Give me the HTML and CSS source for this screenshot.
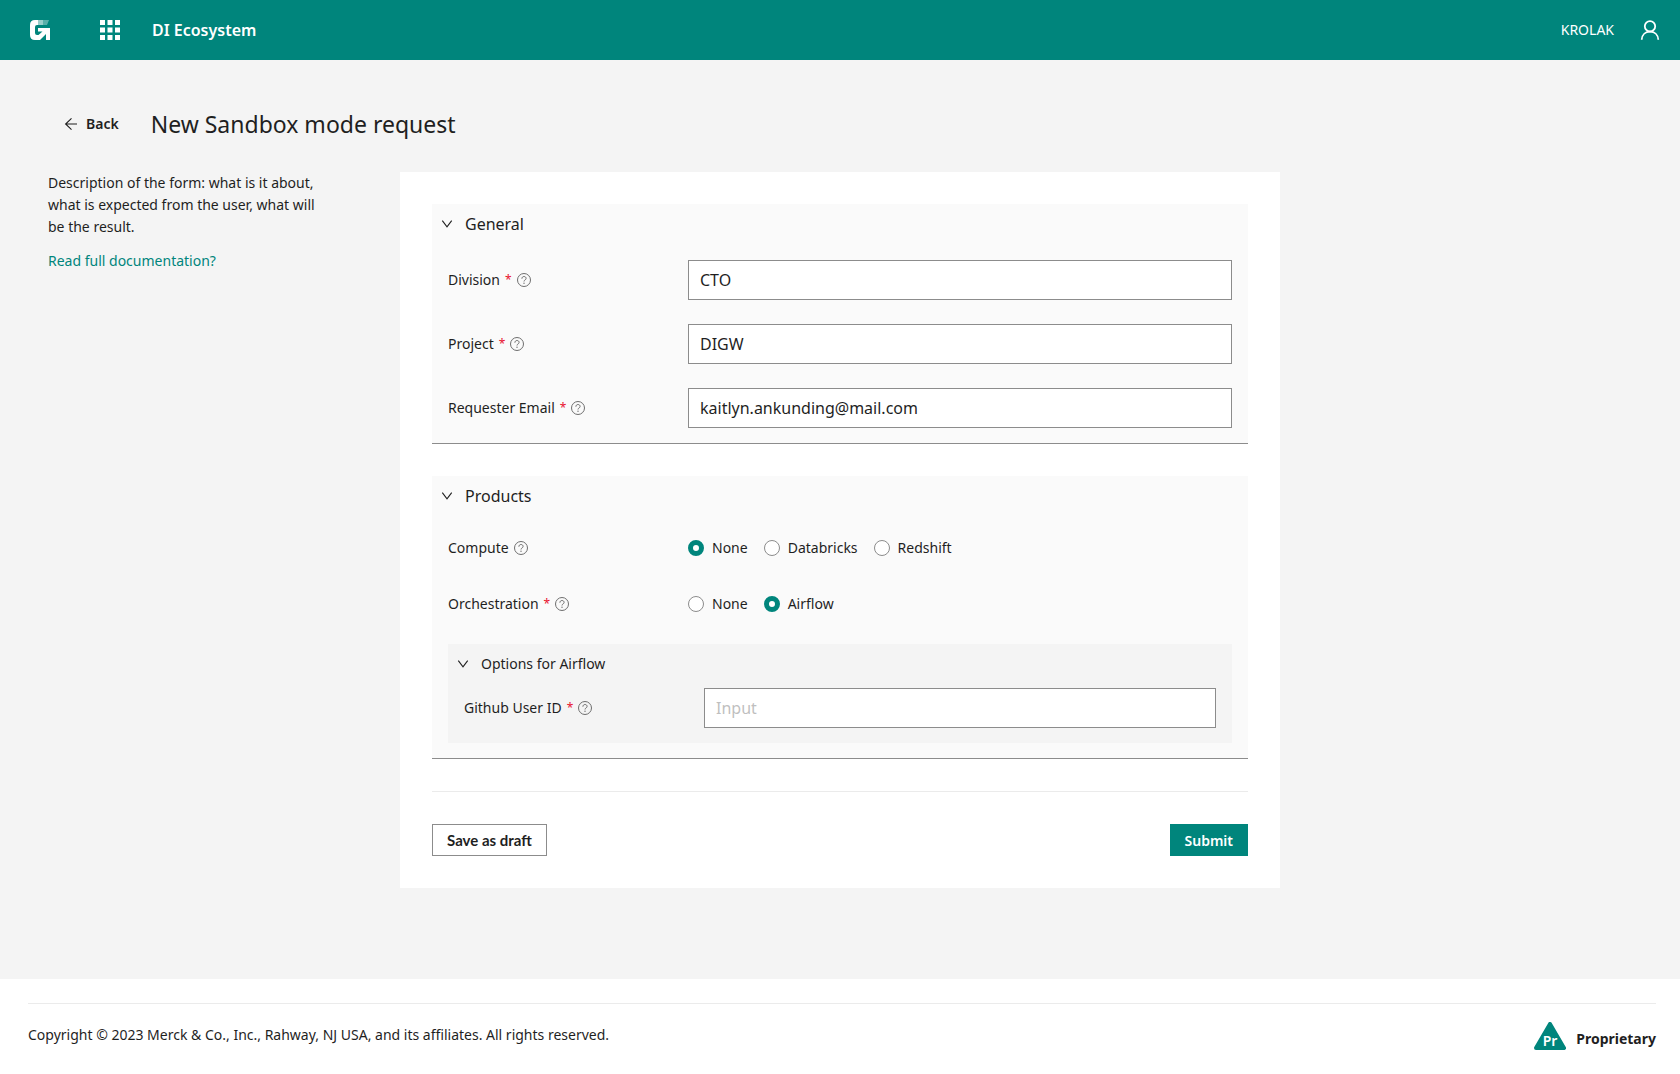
FILE: index.html
```html
<!DOCTYPE html>
<html lang="en">
  <head>
    <meta charset="UTF-8" />
    <meta name="viewport" content="width=device-width, initial-scale=1.0" />

    <title>DI Ecosystem</title>
    <link rel="stylesheet" href="styles.css">
  </head>

  <body>
    <!-- icons used more than once -->
    <svg class="sprite" aria-hidden="true">
      <symbol id="icon-help" viewBox="0 0 14 14">
        <circle cx="7" cy="7" r="6.500" fill="none" stroke="currentColor" stroke-width="1" />
        <path d="M4.900 5.700C4.900 4.300 5.800 3.500 7 3.500s2.100.8 2.100 1.900c0 1.600-2.100 1.500-2.100 3.100" fill="none" stroke="currentColor" stroke-width="1" />
        <circle cx="7" cy="10.200" r="0.700" fill="currentColor" />
      </symbol>
      <symbol id="icon-chevron" viewBox="0 0 12 12">
        <path d="M1.300 2.600 6 8.900l4.700-6.300" fill="none" stroke="currentColor" stroke-width="1.100" />
      </symbol>
    </svg>

    <header class="navbar">
      <a href="/" class="logo" aria-label="Home">
        <svg width="20" height="20" viewBox="0 0 20 20">
          <path d="M5 0h3v5H7Q5 5 5 7v6q0 2 2 2h1.500L12.500 11.500H8V8h12v12h-4v-6l-6 6H5q-5 0-5-5V5q0-5 5-5z" fill="#fff" />
          <path d="M8 0h5v5H8z" fill="#fff" opacity="0.6" />
          <path d="M13 0h6l-2 5h-4z" fill="#fff" opacity="0.35" />
        </svg>
      </a>
      <button type="button" class="icon-btn apps" aria-label="Applications">
        <svg width="20" height="20" viewBox="0 0 20 20" fill="#fff">
          <path d="M0 0h5v5H0zM7.500 0h5v5h-5zM15 0h5v5h-5zM0 7.500h5v5H0zM7.500 7.500h5v5h-5zM15 7.500h5v5h-5zM0 15h5v5H0zM7.500 15h5v5h-5zM15 15h5v5h-5z" />
        </svg>
      </button>
      <span class="brand">DI Ecosystem</span>
      <span class="username">KROLAK</span>
      <button type="button" class="icon-btn" aria-label="Account">
        <svg width="20" height="20" viewBox="0 0 20 20" fill="none" stroke="#fff" stroke-width="1.8">
          <circle cx="10" cy="6.300" r="5.200" />
          <path d="M1.700 19.700c.3-4.800 3.700-8 8.300-8s8 3.200 8.300 8" />
        </svg>
      </button>
    </header>

    <main class="page">
      <div class="page-head">
        <a href="/requests" class="back">
          <svg width="14" height="14" viewBox="0 0 14 14" fill="none" stroke="currentColor" stroke-width="1.1">
            <path d="M13 7H1.500M7.500 1.300 1.600 7l5.900 5.700" />
          </svg>
          Back
        </a>
        <h1>New Sandbox mode request</h1>
      </div>

      <div class="columns">
        <aside class="intro">
          <p>Description of the form: what is it about, what is expected from the user, what will be the result.</p>
          <a href="/docs">Read full documentation?</a>
        </aside>

        <form class="card" action="/requests" method="post">
          <section class="panel">
            <h2 class="panel-title">
              <svg class="chevron"><use href="#icon-chevron" /></svg>
              General
            </h2>
            <div class="field">
              <div class="label">
                <label for="division">Division</label>
                <span class="required">*</span>
                <svg class="help"><use href="#icon-help" /></svg>
              </div>
              <input type="text" id="division" name="division" value="CTO" />
            </div>
            <div class="field">
              <div class="label">
                <label for="project">Project</label>
                <span class="required">*</span>
                <svg class="help"><use href="#icon-help" /></svg>
              </div>
              <input type="text" id="project" name="project" value="DIGW" />
            </div>
            <div class="field">
              <div class="label">
                <label for="email">Requester Email</label>
                <span class="required">*</span>
                <svg class="help"><use href="#icon-help" /></svg>
              </div>
              <input type="email" id="email" name="email" value="kaitlyn.ankunding@mail.com" />
            </div>
          </section>

          <section class="panel">
            <h2 class="panel-title">
              <svg class="chevron"><use href="#icon-chevron" /></svg>
              Products
            </h2>
            <div class="field choice" role="radiogroup" aria-labelledby="compute-label">
              <div class="label">
                <span id="compute-label">Compute</span>
                <svg class="help"><use href="#icon-help" /></svg>
              </div>
              <div class="radios">
                <label><input type="radio" name="compute" value="none" checked />None</label>
                <label><input type="radio" name="compute" value="databricks" />Databricks</label>
                <label><input type="radio" name="compute" value="redshift" />Redshift</label>
              </div>
            </div>
            <div class="field choice" role="radiogroup" aria-labelledby="orchestration-label">
              <div class="label">
                <span id="orchestration-label">Orchestration</span>
                <span class="required">*</span>
                <svg class="help"><use href="#icon-help" /></svg>
              </div>
              <div class="radios">
                <label><input type="radio" name="orchestration" value="none" />None</label>
                <label><input type="radio" name="orchestration" value="airflow" checked />Airflow</label>
              </div>
            </div>

            <div class="subpanel">
              <h3 class="panel-title">
                <svg class="chevron"><use href="#icon-chevron" /></svg>
                Options for Airflow
              </h3>
              <div class="field">
                <div class="label">
                  <label for="github">Github User ID</label>
                  <span class="required">*</span>
                  <svg class="help"><use href="#icon-help" /></svg>
                </div>
                <input type="text" id="github" name="github" placeholder="Input" />
              </div>
            </div>
          </section>

          <div class="actions">
            <button type="button" class="btn btn-draft">Save as draft</button>
            <button type="submit" class="btn btn-primary">Submit</button>
          </div>
        </form>
      </div>
    </main>

    <footer class="footer">
      <div class="footer-inner">
        <span>Copyright © 2023 Merck &amp; Co., Inc., Rahway, NJ USA, and its affiliates. All rights reserved.</span>
        <div class="classification">
          <svg width="32" height="28" viewBox="0 0 32 28">
            <path d="M16 2 30 26H2z" fill="#00857c" stroke="#00857c" stroke-width="4" stroke-linejoin="round" />
            <text x="16" y="24" text-anchor="middle">Pr</text>
          </svg>
          Proprietary
        </div>
      </div>
    </footer>
  </body>
</html>
```

FILE: styles.css
```css
* {
  box-sizing: border-box;
}

body {
  margin: 0;
  min-height: 100vh;
  display: flex;
  flex-direction: column;
  background-color: #f4f4f4;
  color: #1f1f1f;
  font-family: "Noto Sans", sans-serif;
  font-size: 14px;
  line-height: 22px;
}

h1,
h2,
h3,
p {
  margin: 0;
  font-weight: 400;
}

a {
  color: #00857c;
  text-decoration: none;
}

.sprite {
  position: absolute;
  width: 0;
  height: 0;
}

/* top bar */
.navbar {
  display: flex;
  align-items: center;
  height: 60px;
  padding: 0 20px 0 30px;
  background-color: #00857c;
  color: white;
}

.navbar svg,
.back svg {
  display: block;
}

.icon-btn {
  padding: 0;
  border: none;
  background: none;
  cursor: pointer;
}

.apps {
  margin: 0 32px 0 50px;
}

.brand {
  font-size: 16px;
  font-weight: 600;
}

.username {
  margin-left: auto;
  margin-right: 26px;
}

/* page */
.page {
  flex: 1;
  padding: 44px 48px 90px;
}

.page-head {
  display: flex;
  align-items: center;
  gap: 32px;
  height: 40px;
  margin-bottom: 28px;
  padding-left: 16px;
}

.page-head h1 {
  font-size: 23px;
  line-height: 32px;
}

.back {
  display: flex;
  align-items: center;
  gap: 8px;
  color: #1f1f1f;
  font-weight: 600;
}

.columns {
  display: grid;
  grid-template-columns: 1fr minmax(0, 880px) 1fr;
}

.intro {
  max-width: 276px;
}

.intro p {
  margin-bottom: 12px;
}

.card {
  padding: 32px;
  background-color: white;
}

/* collapsible groups */
.panel {
  margin-bottom: 32px;
  padding: 0 16px 15px;
  background-color: #fafafa;
  border-bottom: 1px solid #8c8c8c;
}

.subpanel {
  margin-top: 28px;
  padding: 0 16px 15px;
  background-color: #f4f4f4;
}

.panel-title {
  display: flex;
  align-items: center;
  gap: 12px;
  height: 40px;
  margin-left: -7px;
  font-size: 16px;
}

.subpanel .panel-title {
  font-size: 14px;
}

.chevron {
  width: 12px;
  height: 12px;
}

.field {
  display: grid;
  grid-template-columns: 240px 1fr;
  align-items: center;
  margin-top: 24px;
}

.panel-title + .field {
  margin-top: 16px;
}

.panel-title + .choice {
  margin-top: 20px;
}

.choice {
  height: 24px;
  margin-top: 32px;
}

.subpanel .panel-title + .field {
  margin-top: 4px;
}

.label {
  display: flex;
  align-items: center;
  gap: 5px;
}

.required {
  color: #e8112d;
  font-size: 12px;
}

.help {
  width: 14px;
  height: 14px;
  color: #6e6e6e;
}

.field input[type="text"],
.field input[type="email"] {
  width: 100%;
  height: 40px;
  padding: 0 11px;
  border: 1px solid #8c8c8c;
  border-radius: 0;
  background-color: white;
  color: #1f1f1f;
  font-family: inherit;
  font-size: 16px;
}

.field input::placeholder {
  color: #bfbfbf;
}

.radios {
  display: flex;
  gap: 16px;
}

.radios label {
  display: flex;
  align-items: center;
  gap: 8px;
}

.radios input {
  appearance: none;
  width: 16px;
  height: 16px;
  margin: 0;
  border: 1px solid #8c8c8c;
  border-radius: 50%;
  background-color: white;
}

.radios input:checked {
  border: 5px solid #00857c;
}

.actions {
  display: flex;
  justify-content: space-between;
  padding-top: 32px;
  border-top: 1px solid #ebebeb;
}

.btn {
  height: 32px;
  padding: 0 14px;
  border: 1px solid #8c8c8c;
  background-color: white;
  color: #1f1f1f;
  font-family: inherit;
  font-size: 14px;
  font-weight: 600;
  cursor: pointer;
}

.btn-draft {
  font-family: Lato, sans-serif;
  font-size: 15px;
  font-weight: 700;
}

.btn-primary {
  border-color: #00857c;
  background-color: #00857c;
  color: white;
}

/* footer */
.footer {
  padding: 24px 24px 24px 28px;
  background-color: white;
}

.footer-inner {
  display: flex;
  justify-content: space-between;
  padding-top: 18px;
  border-top: 1px solid #ebebeb;
}

.footer-inner > span {
  padding-top: 2px;
}

.classification {
  display: flex;
  align-items: flex-end;
  gap: 10px;
  height: 28px;
  font-weight: 700;
}

.classification text {
  fill: white;
  font-size: 14px;
  font-weight: 600;
}
```
